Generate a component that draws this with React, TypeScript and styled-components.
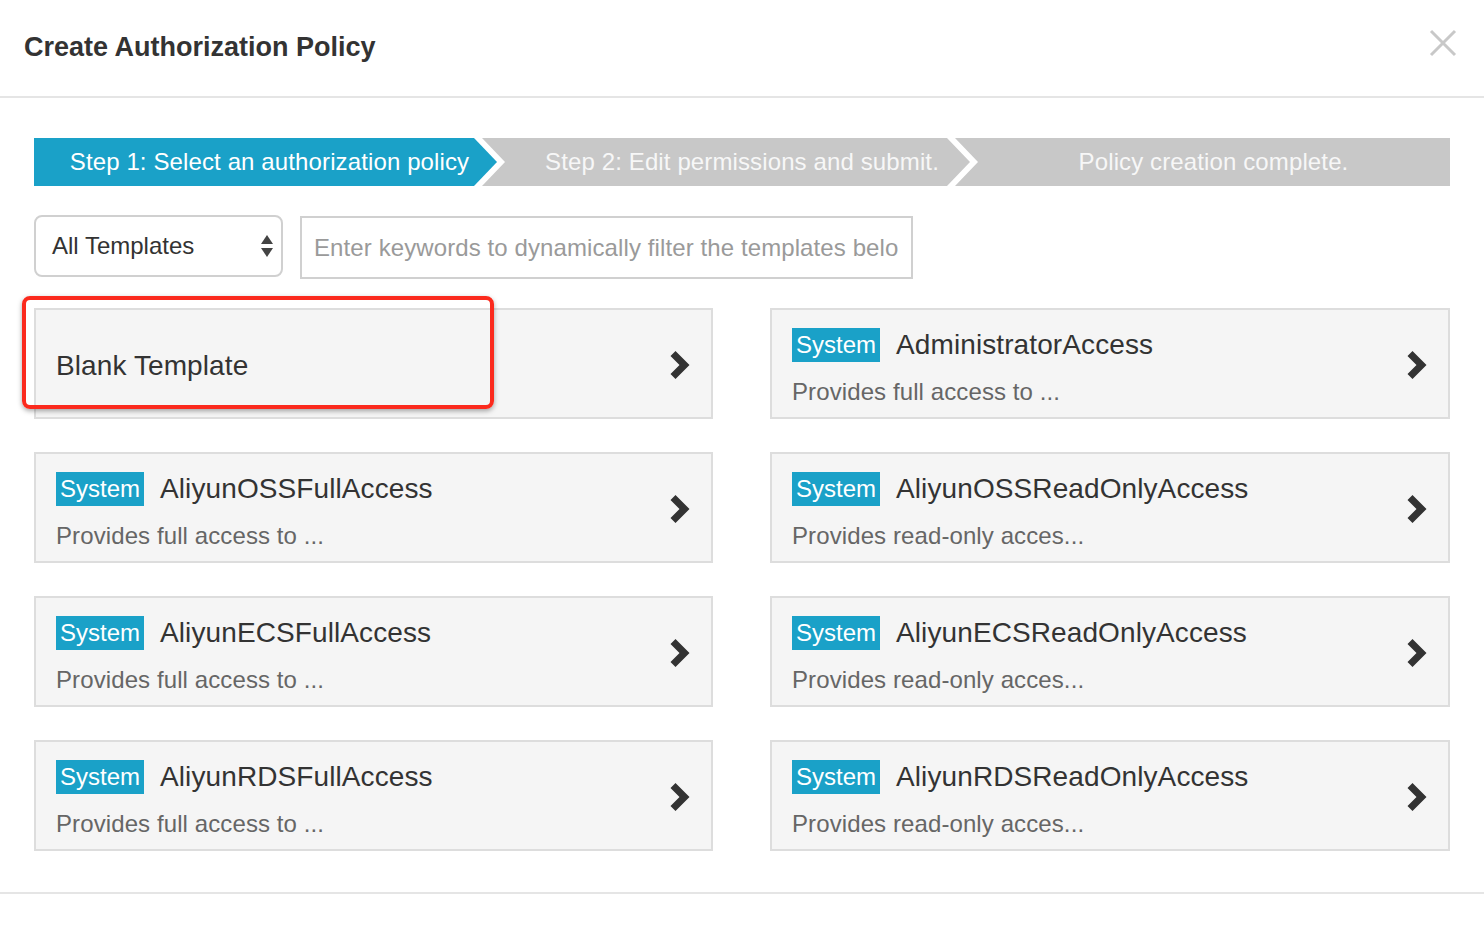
import React from "react";
import styled, { createGlobalStyle } from "styled-components";

const Global = createGlobalStyle`
  html, body { margin: 0; padding: 0; background: #ffffff; }
  body { font-family: "Liberation Sans", Arial, sans-serif; color: #333; }
  * { box-sizing: border-box; }
`;

const BLUE = "#1aa1c8";

const Page = styled.div`
  width: 1484px;
  min-height: 944px;
  background: #fff;
`;

const Header = styled.header`
  height: 98px;
  display: flex;
  align-items: center;
  justify-content: space-between;
  padding: 0 26px 2px 24px;
  border-bottom: 2px solid #e5e5e5;
`;

const Title = styled.h1`
  margin: 0;
  font-size: 27px;
  font-weight: 700;
  color: #333;
`;

const Close = styled.button`
  border: 0;
  background: transparent;
  padding: 0;
  width: 30px;
  height: 30px;
  margin-top: -8px;
  display: flex;
  align-items: center;
  justify-content: center;
  cursor: pointer;
`;

const Body = styled.div`
  padding: 40px 34px 41px 34px;
  border-bottom: 2px solid #e5e5e5;
`;

const Steps = styled.div`
  display: flex;
  height: 48px;
`;

const Step = styled.div<{ $active?: boolean; $first?: boolean; $last?: boolean; $w?: number; $pl: number }>`
  flex: ${(p) => (p.$last ? "1 1 auto" : `0 0 ${p.$w}px`)};
  margin-left: ${(p) => (p.$first ? "0" : "-15px")};
  background: ${(p) => (p.$active ? BLUE : "#c8c8c8")};
  color: ${(p) => (p.$active ? "#ffffff" : "#f7f7f7")};
  font-size: 24px;
  letter-spacing: 0.12px;
  display: flex;
  align-items: center;
  justify-content: center;
  padding-left: ${(p) => p.$pl}px;
  padding-right: ${(p) => (p.$last ? "0" : "8px")};
  clip-path: ${(p) =>
    p.$first
      ? "polygon(0 0, calc(100% - 23px) 0, 100% 50%, calc(100% - 23px) 100%, 0 100%)"
      : p.$last
      ? "polygon(0 0, 100% 0, 100% 100%, 0 100%, 23px 50%)"
      : "polygon(0 0, calc(100% - 23px) 0, 100% 50%, calc(100% - 23px) 100%, 0 100%, 23px 50%)"};
  white-space: nowrap;
`;

const Filters = styled.div`
  display: flex;
  align-items: flex-start;
  margin-top: 29px;
  gap: 17px;
`;

const SelectBox = styled.div`
  width: 249px;
  height: 62px;
  border: 2px solid #d0d0d0;
  border-radius: 8px;
  display: flex;
  align-items: center;
  justify-content: space-between;
  padding: 0 8px 0 16px;
  font-size: 24px;
  color: #333;
  background: #fff;
`;

const SearchInput = styled.input`
  width: 613px;
  height: 63px;
  margin-top: 1px;
  border: 2px solid #d0d0d0;
  border-radius: 0;
  padding: 0 6px 0 12px;
  font-family: "Liberation Sans", Arial, sans-serif;
  font-size: 24px;
  letter-spacing: 0.1px;
  color: #333;
  outline: none;
  &::placeholder { color: #9a9a9a; }
`;

const Grid = styled.div`
  display: grid;
  grid-template-columns: 679px 680px;
  column-gap: 57px;
  row-gap: 33px;
  margin-top: 29px;
`;

const Card = styled.div`
  position: relative;
  height: 111px;
  background: #f5f5f5;
  border: 2px solid #dddddd;
  display: flex;
  align-items: stretch;
`;

const CardBody = styled.div<{ $blank?: boolean }>`
  flex: 1;
  display: flex;
  flex-direction: column;
  justify-content: ${(p) => (p.$blank ? "center" : "flex-start")};
  padding: ${(p) => (p.$blank ? "5px 0 0 20px" : "18px 0 0 20px")};
`;

const NameRow = styled.div`
  display: flex;
  align-items: center;
  gap: 16px;
  height: 34px;
`;

const Badge = styled.span`
  background: ${BLUE};
  color: #fff;
  font-size: 24px;
  height: 34px;
  line-height: 34px;
  padding: 0 4px;
`;

const Name = styled.span`
  font-size: 28px;
  color: #333;
  letter-spacing: 0.1px;
`;

const Desc = styled.div`
  margin-top: 16px;
  font-size: 24px;
  line-height: 28px;
  letter-spacing: 0.1px;
  color: #666;
`;

const Arrow = styled.div`
  align-self: center;
  margin-top: 2px;
  margin-right: 21px;
  display: flex;
`;

const Highlight = styled.div`
  position: absolute;
  left: -14px;
  top: -14px;
  width: 472px;
  height: 113px;
  border: 4px solid #fb2a1d;
  border-radius: 8px;
  box-shadow: 0 2px 5px rgba(0, 0, 0, 0.35);
  pointer-events: none;
`;

const Chevron = () => (
  <svg width="21" height="28" viewBox="0 0 21 28">
    <polygon points="1.5,5 6.5,0 20.5,14 6.5,28 1.5,23 10.5,14" fill="#333" />
  </svg>
);

const SortArrows = () => (
  <svg width="12" height="22" viewBox="0 0 12 22">
    <polygon points="6,0 12,9 0,9" fill="#444" />
    <polygon points="0,13 12,13 6,22" fill="#444" />
  </svg>
);

const items: { name: string; desc: string }[] = [
  { name: "AdministratorAccess", desc: "Provides full access to ..." },
  { name: "AliyunOSSFullAccess", desc: "Provides full access to ..." },
  { name: "AliyunOSSReadOnlyAccess", desc: "Provides read-only acces..." },
  { name: "AliyunECSFullAccess", desc: "Provides full access to ..." },
  { name: "AliyunECSReadOnlyAccess", desc: "Provides read-only acces..." },
  { name: "AliyunRDSFullAccess", desc: "Provides full access to ..." },
  { name: "AliyunRDSReadOnlyAccess", desc: "Provides read-only acces..." },
];

export default function App() {
  return (
    <Page>
      <Global />
      <Header>
        <Title>Create Authorization Policy</Title>
        <Close aria-label="close">
          <svg width="28" height="28" viewBox="0 0 28 28">
            <path d="M2 2 L26 26 M26 2 L2 26" stroke="#c8c8c8" strokeWidth="3" />
          </svg>
        </Close>
      </Header>
      <Body>
        <Steps>
          <Step $active $first $w={463} $pl={16}>Step 1: Select an authorization policy</Step>
          <Step $w={488} $pl={40}>Step 2: Edit permissions and submit.</Step>
          <Step $last $pl={22}>Policy creation complete.</Step>
        </Steps>
        <Filters>
          <SelectBox>
            <span>All Templates</span>
            <SortArrows />
          </SelectBox>
          <SearchInput placeholder="Enter keywords to dynamically filter the templates belo" />
        </Filters>
        <Grid>
          <Card>
            <CardBody $blank>
              <Name>Blank Template</Name>
            </CardBody>
            <Arrow>
              <Chevron />
            </Arrow>
            <Highlight />
          </Card>
          {items.map((it) => (
            <Card key={it.name}>
              <CardBody>
                <NameRow>
                  <Badge>System</Badge>
                  <Name>{it.name}</Name>
                </NameRow>
                <Desc>{it.desc}</Desc>
              </CardBody>
              <Arrow>
                <Chevron />
              </Arrow>
            </Card>
          ))}
        </Grid>
      </Body>
    </Page>
  );
}
